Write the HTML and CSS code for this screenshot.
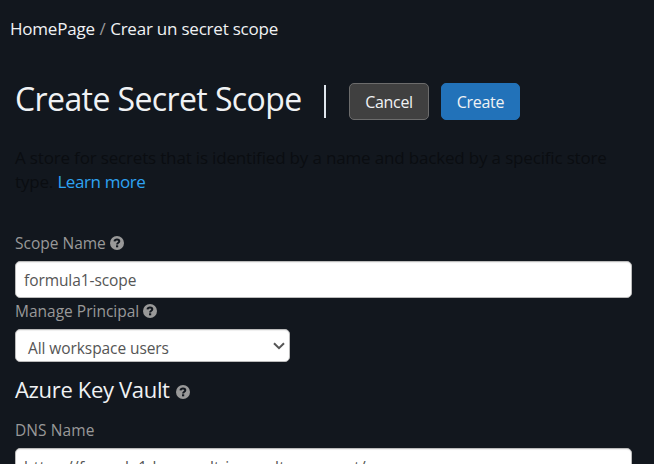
FILE: index.html
```html
<!DOCTYPE html>
<html lang="en">
<head>
<meta charset="utf-8">
<title>Create Secret Scope</title>
<link rel="stylesheet" href="styles.css">
</head>
<body>
<svg width="0" height="0" class="defs" aria-hidden="true">
  <symbol id="help" viewBox="0 0 14 14">
    <circle cx="7" cy="7" r="7" fill="currentColor"/>
    <path d="M4.500 5.400C4.700 4 5.700 3.400 7 3.400c1.400 0 2.300.7 2.300 1.800 0 1.500-2.200 1.500-2.200 3.200" fill="none" stroke="#12171e" stroke-width="2"/>
    <rect x="6" y="9.300" width="2.200" height="2" fill="#12171e"/>
  </symbol>
</svg>
<nav class="breadcrumb"><span>HomePage</span> <i>/</i> <span>Crear un secret scope</span></nav>
<main>
  <header class="head">
    <h1>Create Secret Scope</h1>
    <span class="divider"></span>
    <button class="btn cancel">Cancel</button>
    <button class="btn create">Create</button>
  </header>
  <p class="intro">A store for secrets that is identified by a name and backed by a specific store<br>type. <a>Learn more</a></p>
  <label class="label scope"><span>Scope Name</span><svg class="help"><use href="#help"/></svg></label>
  <div class="field"><span>formula1-scope</span></div>
  <label class="label manage"><span>Manage Principal</span><svg class="help"><use href="#help"/></svg></label>
  <div class="field select"><span>All workspace users</span><svg class="chevron" viewBox="0 0 12 8"><path d="M1 1.200 6 6.200 11 1.200" fill="none" stroke="#555" stroke-width="2"/></svg></div>
  <h2><span>Azure Key Vault</span><svg class="help"><use href="#help"/></svg></h2>
  <label class="label dns"><span>DNS Name</span></label>
  <div class="field"><span class="url">https://formula1-key-vault-jm.vault.azure.net/</span></div>
</main>
</body>
</html>
```
FILE: styles.css
```css
* { box-sizing: border-box; }
html, body { height: 464px; overflow: hidden; }
body { margin: 0; background: #12171e; color: #f0f2f4; font-family: "Open Sans", "Noto Sans", sans-serif; font-size: 16px; }
.defs { display: block; }
.breadcrumb { padding: 17px 10px 0; height: 83px; font-size: 17px; line-height: 24px; white-space: nowrap; letter-spacing: -0.22px; }
.breadcrumb i { font-style: normal; color: #999; margin: 0 0.500px; }
main { padding: 0 22px 0 15px; }
.head { display: flex; height: 37px; }
h1 { margin: 0; width: 310px; font-size: 32px; font-weight: 400; line-height: 32px; white-space: nowrap; letter-spacing: -0.6px; }
.divider { width: 2px; height: 33px; margin: 2px 23px 0 -1px; background: #dfe6ed; }
.btn { font: 400 16px/36px "Open Sans", sans-serif; letter-spacing: -0.3px; height: 37px; padding: 0; border-radius: 5px; color: #f0f2f4; }
.cancel { width: 80px; border: 1px solid #6c6c6c; background: #404040; margin-right: 12px; }
.create { width: 79px; border: 1px solid #2272b9; background: #2272b9; }
.intro { margin: 26px 0 0; height: 85px; line-height: 24px; font-size: 17px; letter-spacing: -0.17px; color: #0a0d11; white-space: nowrap; }
.intro a { color: #2ea3f2; letter-spacing: -0.4px; }
.label { display: flex; align-items: center; gap: 4px; color: #999; font-size: 15.500px; line-height: 24px; white-space: nowrap; }
.scope { height: 30px; padding-bottom: 6px; }
.manage { height: 31px; padding-bottom: 6px; }
.help { width: 14px; height: 14px; color: #999; }
.field { height: 37px; border: 1px solid #bbb; border-radius: 5px; background: #fff; color: #555; padding-left: 8px; line-height: 36px; font-size: 15.500px; letter-spacing: -0.08px; box-shadow: inset 0 1px 1px #0001; white-space: nowrap; }
.url { letter-spacing: 0.27px; }
.select { width: 275px; height: 33px; padding: 0 4px 0 12px; display: flex; justify-content: space-between; line-height: 37px; }
.chevron { width: 12px; height: 8px; margin-top: 12px; }
h2 { margin: 12px 0 0; display: flex; height: 44px; gap: 6px; font-size: 22px; font-weight: 400; line-height: 31px; letter-spacing: -0.33px; white-space: nowrap; }
h2 .help { margin-top: 11px; }
.dns { height: 30px; padding-bottom: 6px; letter-spacing: 0.1px; }
```
